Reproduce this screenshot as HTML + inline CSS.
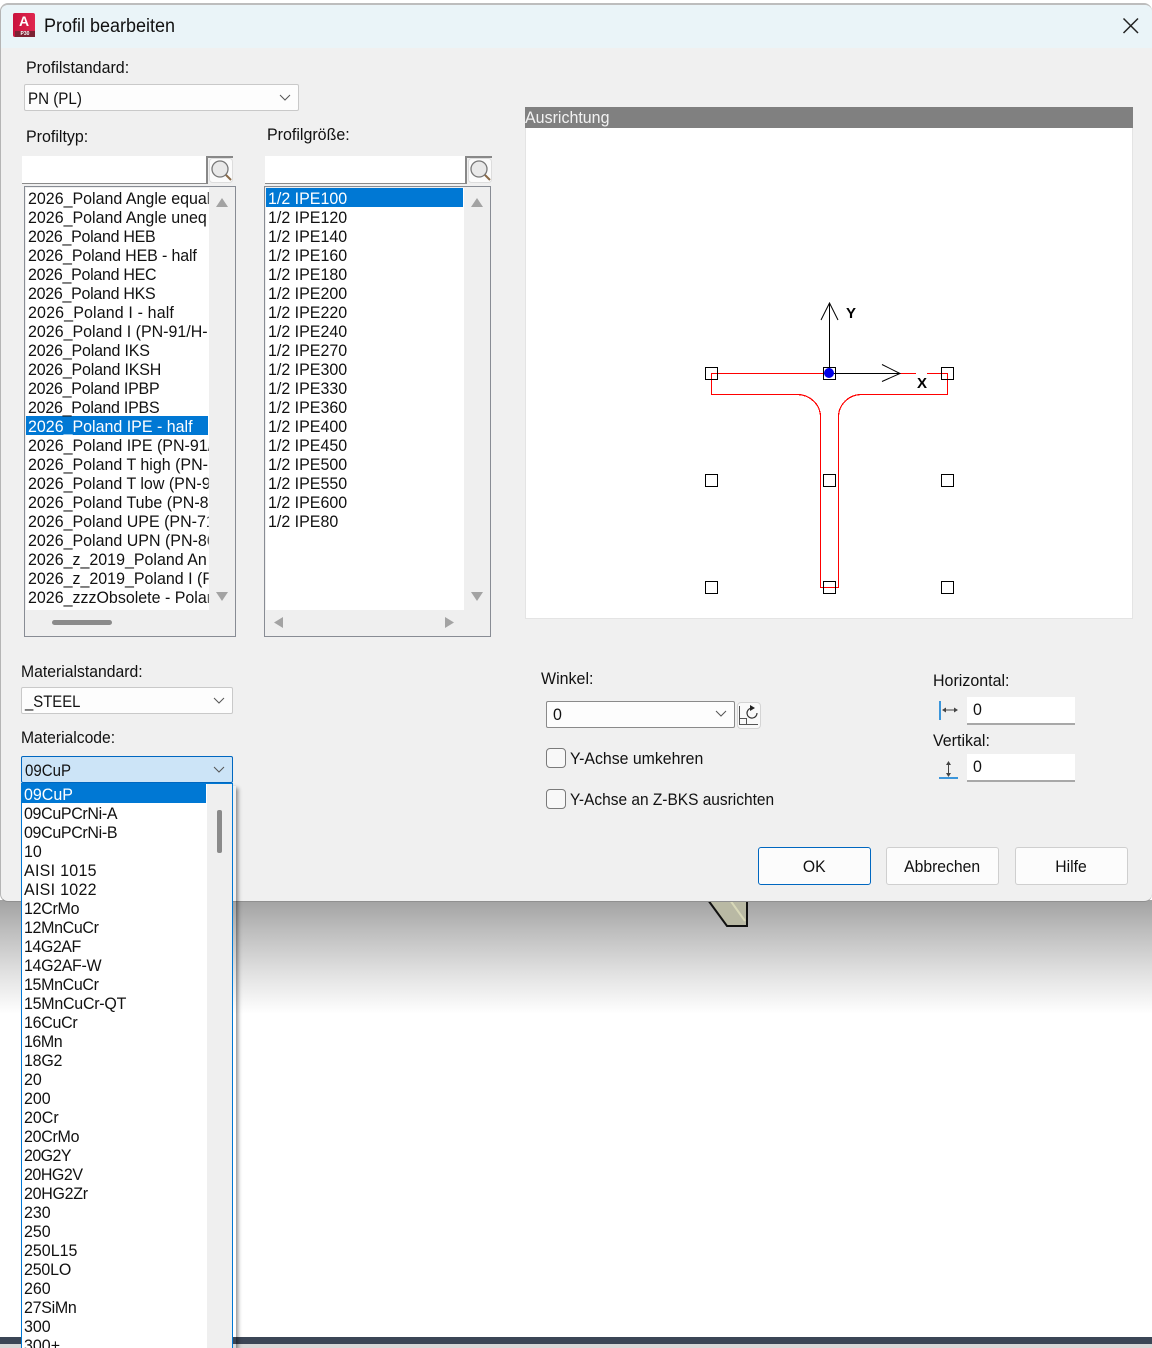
<!DOCTYPE html>
<html><head><meta charset="utf-8"><style>
html,body{margin:0;padding:0}
body{width:1152px;height:1348px;position:relative;overflow:hidden;background:#fff;font-family:"Liberation Sans",sans-serif;font-size:17px;color:#111}
div{position:absolute;box-sizing:border-box}
.t{white-space:nowrap;line-height:19px;transform-origin:0 50%;transform:scaleX(.941)}
.n{transform:none}
.l{white-space:pre;line-height:19px;transform-origin:0 50%;transform:scaleX(.941)}
.a{letter-spacing:-.3px}.b5{letter-spacing:-.5px}.p{letter-spacing:.3px}
.c{background:#fdfdfd;border:1px solid #c9c9c9;border-radius:2px}
.i{background:#fff;border-bottom:2px solid #8a8a8a}
.b{background:#fcfcfc;border:1px solid #cfcfcf;border-radius:3px;text-align:center;line-height:38px;top:847px;width:113px;height:38px}
.b span{display:inline-block;transform:scaleX(.925)}
.cb{left:546px;width:20px;height:20px;background:#f8f8f8;border:1px solid #7a7a7a;border-radius:4px}
svg{position:absolute;left:0;top:0}
</style></head><body>
<div style="left:0;top:900px;width:1152px;height:120px;background:linear-gradient(#a2a2a2,#bdbdbd 25%,#e2e2e2 62%,#fff 95%)"></div>
<div style="left:0;top:1337px;width:1152px;height:7px;background:#3b4656"></div>
<div style="left:0;top:1344px;width:1152px;height:4px;background:#d8d8d8"></div>
<svg width="1152" height="1348" style="z-index:0"><path d="M708 900L727 926H747V900Z" fill="#b9b9a4" stroke="#111" stroke-width="2"/><path d="M730 900L745 921" stroke="#d8d8b8" stroke-width="2"/></svg>

<div style="left:0;top:3px;width:1152px;height:899px;background:#f0f0f0;border-top:2px solid #bdbdbd;border-left:1px solid #b5b5b5;border-bottom:1px solid #909090;border-radius:8px 8px 8px 8px"></div>
<div style="left:1px;top:5px;width:1151px;height:43px;background:#eaf4f8;border-radius:7px 7px 0 0"></div>

<div style="left:13px;top:13px;width:22px;height:24px;background:linear-gradient(90deg,#c9123d,#e0264f);border-radius:2px"></div>
<div style="left:15px;top:31px;width:20px;height:6px;background:#7c2233"></div>
<div class="t n" style="left:13px;top:13px;width:22px;text-align:center;color:#fff;font-weight:bold;font-size:14px;line-height:17px">A</div>
<div class="t n" style="left:15px;top:31px;width:20px;text-align:center;color:#fff;font-weight:bold;font-size:5px;line-height:6px">P30</div>
<div class="t" style="left:44px;top:17px;font-size:19px;transform:scaleX(.947)">Profil bearbeiten</div>
<svg width="1152" height="60"><path d="M1123.500 18.500L1138 33M1138 18.500L1123.500 33" stroke="#222" stroke-width="1.500"/></svg>

<div class="t" style="left:26px;top:58px">Profilstandard:</div>
<div class="c" style="left:24px;top:84px;width:275px;height:27px"></div>
<div class="t" style="left:28px;top:89px;transform:scaleX(.891)">PN (PL)</div>
<div class="t" style="left:26px;top:127px">Profiltyp:</div>
<div class="t" style="left:267px;top:125px">Profilgröße:</div>

<div class="i" style="left:22px;top:156px;width:185px;height:28px;border-bottom-width:1px"></div>
<div class="i" style="left:265px;top:156px;width:201px;height:28px;border-bottom-width:1px"></div>

<div style="left:24px;top:186px;width:212px;height:451px;background:#efefef;border:1px solid #888c94"></div>
<div style="left:26px;top:188px;width:183px;height:422px;background:#fff;overflow:hidden">
<div style="left:0;top:228px;width:182px;height:19px;background:#0078d4"></div>
<div class="l" style="left:2px;top:1px;width:192px;overflow:hidden">2026_Poland Angle equal
2026_Poland Angle uneq
<span class="a">2026_Poland HEB</span>
<span style="letter-spacing:-.14px">2026_Poland HEB - half</span>
<span class="a">2026_Poland HEC</span>
<span class="a">2026_Poland HKS</span>
<span style="letter-spacing:.15px">2026_Poland I - half</span>
2026_Poland I (PN-91/H-
<span style="letter-spacing:-.2px">2026_Poland IKS</span>
<span style="letter-spacing:-.2px">2026_Poland IKSH</span>
<span style="letter-spacing:-.25px">2026_Poland IPBP</span>
<span style="letter-spacing:-.25px">2026_Poland IPBS</span>
<span style="color:#fff">2026_Poland IPE - half</span>
2026_Poland IPE (PN-91/
2026_Poland T high (PN-
2026_Poland T low (PN-9
2026_Poland Tube (PN-8
2026_Poland UPE (PN-71
2026_Poland UPN (PN-86
2026_z_2019_Poland An
2026_z_2019_Poland I (P
2026_zzzObsolete - Polar</div></div>

<div style="left:264px;top:186px;width:227px;height:451px;background:#efefef;border:1px solid #888c94"></div>
<div style="left:266px;top:188px;width:198px;height:422px;background:#fff;overflow:hidden">
<div style="left:0;top:0;width:197px;height:19px;background:#0078d4"></div>
<div class="l" style="left:2px;top:1px"><span style="color:#fff">1/2 IPE100</span>
1/2 IPE120
1/2 IPE140
1/2 IPE160
1/2 IPE180
1/2 IPE200
1/2 IPE220
1/2 IPE240
1/2 IPE270
1/2 IPE300
1/2 IPE330
1/2 IPE360
1/2 IPE400
1/2 IPE450
1/2 IPE500
1/2 IPE550
1/2 IPE600
1/2 IPE80</div></div>

<svg width="1152" height="700">
<path d="M207 184V157H233" fill="none" stroke="#888" stroke-width="2"/><rect x="209.500" y="158.500" width="23" height="24" rx="3" fill="#fbfbfb" stroke="#ddd"/><circle cx="220" cy="169" r="8" fill="#e9e9e9" stroke="#777" stroke-width="1.300"/><path d="M226 175L231 180" stroke="#8a6a48" stroke-width="2"/>
<path d="M466 184V157H492" fill="none" stroke="#888" stroke-width="2"/><rect x="468.500" y="158.500" width="23" height="24" rx="3" fill="#fbfbfb" stroke="#ddd"/><circle cx="479" cy="169" r="8" fill="#e9e9e9" stroke="#777" stroke-width="1.300"/><path d="M485 175L490 180" stroke="#8a6a48" stroke-width="2"/>
<path d="M216 207L222 198L228 207ZM216 592L228 592L222 601ZM471 207L477 198L483 207ZM471 592L483 592L477 601ZM283 617V628L274 622.500ZM445 617V628L454 622.500Z" fill="#a3a3a3"/>
<rect x="52" y="620" width="60" height="5" rx="2.500" fill="#8a8a8a"/>
<path d="M280 95L285 100L290 95" fill="none" stroke="#555" stroke-width="1"/>
</svg>

<div style="left:525px;top:107px;width:608px;height:512px;background:#fff;border:1px solid #e4e4e4;border-top:0"></div>
<div style="left:525px;top:107px;width:608px;height:21px;background:#808080"></div>
<div class="t" style="left:525px;top:108px;color:#f2f2f2">Ausrichtung</div>
<svg width="1152" height="640" shape-rendering="crispEdges">
<g fill="none" stroke="#f00" stroke-width="1.200"><path d="M916 373.500H711.500V394.500H797" /><path d="M797 394.500A23.500 22.500 0 0 1 820.500 417V587.500H838.500V417A23 22.500 0 0 1 861.500 394.500H947.500V373.500H927"/><path d="M900 373.500H916"/></g>
<g fill="none" stroke="#000" stroke-width="1">
<rect x="705.500" y="367.500" width="12" height="12"/><rect x="823.500" y="367.500" width="12" height="12"/><rect x="941.500" y="367.500" width="12" height="12"/>
<rect x="705.500" y="474.500" width="12" height="12"/><rect x="823.500" y="474.500" width="12" height="12"/><rect x="941.500" y="474.500" width="12" height="12"/>
<rect x="705.500" y="581.500" width="12" height="12"/><rect x="823.500" y="581.500" width="12" height="12"/><rect x="941.500" y="581.500" width="12" height="12"/>
<path d="M829.500 373V304M829.500 373.500H899"/>
<g shape-rendering="auto"><path d="M821 320L829.500 303L838 320M882 364.500L900 373.500L882 381.500"/></g></g>
<circle cx="829" cy="373" r="5" fill="#0000e6" shape-rendering="auto"/>
</svg>
<div class="t n" style="left:846px;top:305px;font-size:15px;line-height:18px;color:#000;font-weight:bold">Y</div>
<div class="t n" style="left:917px;top:375px;font-size:15px;line-height:18px;color:#000;font-weight:bold">X</div>

<div class="t" style="left:21px;top:662px;transform:scaleX(.926)">Materialstandard:</div>
<div class="c" style="left:21px;top:687px;width:212px;height:27px"></div>
<div class="t" style="left:25px;top:692px;transform:scaleX(.875)">_STEEL</div>
<div class="t" style="left:21px;top:728px;transform:scaleX(.922)">Materialcode:</div>
<div style="left:21px;top:756px;width:212px;height:27px;background:#cce4f7;border:1px solid #0067c0;border-radius:2px"></div>
<div class="t" style="left:25px;top:761px;transform:scaleX(.885)">09CuP</div>

<div class="t" style="left:541px;top:669px">Winkel:</div>
<div class="c" style="left:546px;top:701px;width:189px;height:27px;border-color:#8a8a8a"></div>
<div class="t" style="left:553px;top:705px">0</div>
<div style="left:737px;top:702px;width:24px;height:27px;background:#fafafa;border:1px solid #d4d4d4;border-radius:4px"></div>
<div class="cb" style="top:748px"></div>
<div class="t" style="left:570px;top:749px;transform:scaleX(.932)">Y-Achse umkehren</div>
<div class="cb" style="top:789px"></div>
<div class="t" style="left:570px;top:790px;transform:scaleX(.91)">Y-Achse an Z-BKS ausrichten</div>

<div class="t" style="left:933px;top:671px">Horizontal:</div>
<div class="i" style="left:967px;top:697px;width:108px;height:28px;border-bottom-color:#a8a8a8"></div>
<div class="t" style="left:973px;top:700px">0</div>
<div class="t" style="left:933px;top:731px">Vertikal:</div>
<div class="i" style="left:967px;top:754px;width:108px;height:28px;border-bottom-color:#a8a8a8"></div>
<div class="t" style="left:973px;top:757px">0</div>

<div class="b" style="left:758px;border-color:#0067c0"><span>OK</span></div>
<div class="b" style="left:886px"><span>Abbrechen</span></div>
<div class="b" style="left:1015px"><span>Hilfe</span></div>

<svg width="1152" height="800">
<path d="M214 698L219 703L224 698M214 767L219 772L224 767M716 711L721 716L726 711" fill="none" stroke="#555" stroke-width="1"/>
<path d="M739.500 706V724.500H758M739.500 718.500H746.500V724.500" fill="none" stroke="#555"/>
<path d="M757 713A5 5 0 1 1 751 708.200" fill="none" stroke="#333" stroke-width="1.200"/><path d="M750 705L755 708L750 711Z" fill="#222"/>
<path d="M940 701V720" stroke="#0078d4" stroke-width="1.500"/>
<path d="M943 710H957" stroke="#444"/><path d="M946 707.500L942 710L946 712.500ZM954 707.500L958 710L954 712.500Z" fill="#444"/>
<path d="M939 778H958" stroke="#0078d4" stroke-width="1.500"/>
<path d="M948.500 763V775" stroke="#444"/><path d="M946 765L948.500 761L951 765ZM946 773L948.500 777L951 773Z" fill="#444"/>
</svg>

<div style="left:23px;top:786px;width:213px;height:562px;box-shadow:2px 2px 4px rgba(0,0,0,.45)"></div>
<div style="left:21px;top:783px;width:212px;height:565px;background:#efefef;border:1px solid #0078d4;border-width:1px 1px 0 1px;overflow:hidden">
<div style="left:0;top:0;width:185px;height:565px;background:#fff"></div>
<div style="left:0;top:0;width:184px;height:19px;background:#0078d4"></div>
<div style="left:195px;top:26px;width:5px;height:43px;background:#8a8a8a;border-radius:2px"></div>
<div class="l" style="left:2px;top:1px"><span style="color:#fff">09CuP</span>
<span style="letter-spacing:-.36px">09CuPCrNi-A</span>
<span style="letter-spacing:-.36px">09CuPCrNi-B</span>
10
<span class="p">AISI 1015</span>
<span class="p">AISI 1022</span>
<span class="a">12CrMo</span>
<span style="letter-spacing:-.37px">12MnCuCr</span>
<span class="b5">14G2AF</span>
<span style="letter-spacing:-.37px">14G2AF-W</span>
<span style="letter-spacing:-.37px">15MnCuCr</span>
<span style="letter-spacing:-.27px">15MnCuCr-QT</span>
<span class="a">16CuCr</span>
<span class="b5">16Mn</span>
<span style="letter-spacing:-.25px">18G2</span>
20
200
20Cr
<span class="a">20CrMo</span>
<span style="letter-spacing:-.6px">20G2Y</span>
<span class="b5">20HG2V</span>
<span class="a">20HG2Zr</span>
230
250
250L15
<span style="letter-spacing:-.2px">250LO</span>
260
<span class="a">27SiMn</span>
300
300+</div></div>
</body></html>
